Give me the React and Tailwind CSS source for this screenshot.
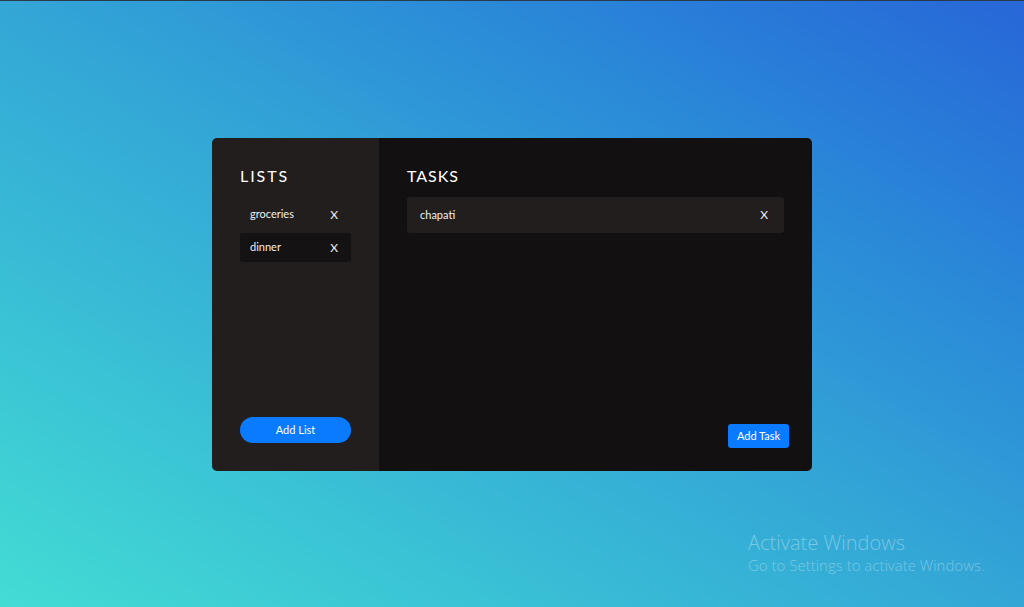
import React, { useState } from 'react';

const lato = { fontFamily: 'Lato, "Open Sans", sans-serif' };

function App() {
  const [lists] = useState(['groceries', 'dinner']);
  const [activa] = useState('dinner');
  const [tareas] = useState(['chapati']);

  return (
    <div
      className="relative w-full h-[607px] overflow-hidden border-t border-[#2b3a48] bg-gradient-to-tr from-[#43dcd3] via-[#33a6d6] to-[#2866d8] flex justify-center items-start pt-[137px]"
      style={lato}
    >
      <div className="w-[600px] h-[333px] flex rounded-[5px] overflow-hidden">
        {/* Lists */}
        <div className="w-[167px] bg-[#221e1d] flex flex-col px-[28px] pt-[26px] pb-[28px]">
          <h2 className="text-white text-[16px] leading-6 tracking-[0.12em] font-normal">LISTS</h2>
          <ul className="mt-3 flex flex-col gap-[4px]">
            {lists.map((l) => (
              <li
                key={l}
                className={`h-[29px] flex items-center justify-between pl-[10px] pr-[13px] rounded-[3px] text-[11px] text-[#f1f1f1] ${
                  l === activa ? 'bg-[#141212]' : ''
                }`}
              >
                <span>{l}</span>
                <span className="text-[12px]">X</span>
              </li>
            ))}
          </ul>
          <button className="mt-auto h-[26px] w-[111px] rounded-full bg-[#0a7bff] text-white text-[11px]">
            Add List
          </button>
        </div>

        {/* Tasks */}
        <div className="flex-1 bg-[#121011] flex flex-col pl-[28px] pr-[28px] pt-[26px] pb-[23px]">
          <h2 className="text-white text-[16px] leading-6 tracking-[0.06em] font-normal">TASKS</h2>
          <ul className="mt-[9px] flex flex-col gap-1">
            {tareas.map((t) => (
              <li
                key={t}
                className="h-[36px] flex items-center justify-between pl-[13px] pr-[16px] rounded-[3px] bg-[#221e1d] text-[11px] text-[#f1f1f1]"
              >
                <span>{t}</span>
                <span className="text-[12px]">X</span>
              </li>
            ))}
          </ul>
          <div className="mt-auto flex justify-end -mr-[5px]">
            <button className="h-[24px] w-[61px] rounded-[3px] bg-[#0a7bff] text-white text-[11px]">
              Add Task
            </button>
          </div>
        </div>
      </div>

      {/* watermark */}
      <div
        className="absolute left-[748px] top-[528px] text-white/35 font-light"
        style={{ fontFamily: '"Open Sans", "Noto Sans", sans-serif' }}
      >
        <p className="text-[20px] leading-[27px]">Activate Windows</p>
        <p className="text-[15px] leading-[20px] -mt-[1px]">Go to Settings to activate Windows.</p>
      </div>
    </div>
  );
}

export default App;
